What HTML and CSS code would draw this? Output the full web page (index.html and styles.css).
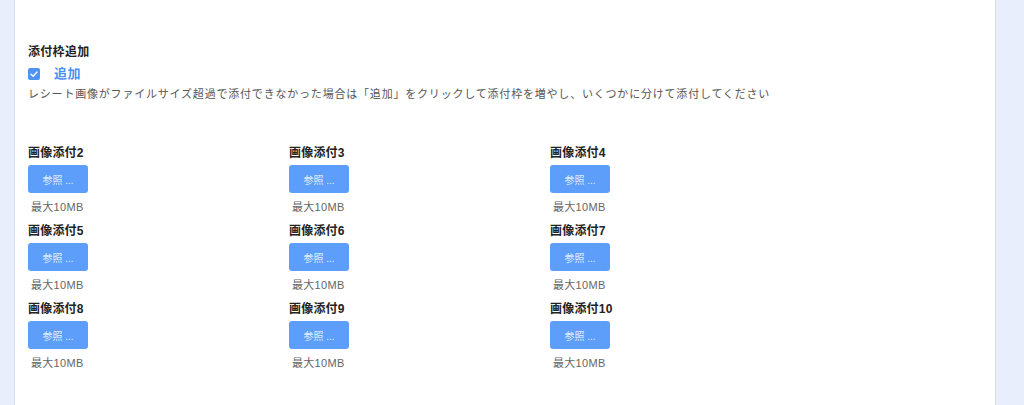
FILE: index.html
```html
<!DOCTYPE html>
<html lang="ja">
<head>
<meta charset="utf-8">
<link rel="stylesheet" href="styles.css">
</head>
<body>
<div class="page">
  <div class="card">
    <div class="section-title">添付枠追加</div>
    <label class="check-row">
      <span class="checkbox">
        <svg viewBox="0 0 12 12" width="12" height="12"><path d="M3 6.2 L5.1 8.2 L9 4" fill="none" stroke="#fff" stroke-width="1.4" stroke-linecap="round" stroke-linejoin="round"/></svg>
      </span>
      <span class="check-label">追加</span>
    </label>
    <p class="desc">レシート画像がファイルサイズ超過で添付できなかった場合は「追加」をクリックして添付枠を増やし、いくつかに分けて添付してください</p>
    <div class="grid">
      <div class="slot"><div class="slot-label">画像添付2</div><button class="browse">参照 ...</button><div class="limit">最大10MB</div></div>
      <div class="slot"><div class="slot-label">画像添付3</div><button class="browse">参照 ...</button><div class="limit">最大10MB</div></div>
      <div class="slot"><div class="slot-label">画像添付4</div><button class="browse">参照 ...</button><div class="limit">最大10MB</div></div>
      <div class="slot"><div class="slot-label">画像添付5</div><button class="browse">参照 ...</button><div class="limit">最大10MB</div></div>
      <div class="slot"><div class="slot-label">画像添付6</div><button class="browse">参照 ...</button><div class="limit">最大10MB</div></div>
      <div class="slot"><div class="slot-label">画像添付7</div><button class="browse">参照 ...</button><div class="limit">最大10MB</div></div>
      <div class="slot"><div class="slot-label">画像添付8</div><button class="browse">参照 ...</button><div class="limit">最大10MB</div></div>
      <div class="slot"><div class="slot-label">画像添付9</div><button class="browse">参照 ...</button><div class="limit">最大10MB</div></div>
      <div class="slot"><div class="slot-label">画像添付10</div><button class="browse">参照 ...</button><div class="limit">最大10MB</div></div>
    </div>
  </div>
</div>
</body>
</html>
```

FILE: styles.css
```css
* { box-sizing: border-box; }
html, body {
  margin: 0;
  padding: 0;
  background: #e8eefc;
  font-family: "Liberation Sans", "Noto Sans CJK JP", sans-serif;
}
.page {
  width: 1024px;
  height: 405px;
  overflow: hidden;
}
.card {
  margin-left: 14px;
  width: 982px;
  height: 405px;
  background: #fff;
  border-left: 1px solid #d8dce6;
  border-right: 1px solid #d8dce6;
  padding: 44px 13px 0;
}
.section-title {
  font-size: 12px;
  font-weight: 700;
  line-height: 16px;
  color: #222;
  letter-spacing: 0.3px;
}
.check-row {
  display: flex;
  align-items: center;
  gap: 14px;
  height: 16px;
  margin-top: 6px;
}
.checkbox {
  width: 12px;
  height: 12px;
  border-radius: 2px;
  background: #4f93f4;
  display: flex;
}
.check-label {
  font-size: 13px;
  font-weight: 700;
  color: #4a90f0;
  line-height: 16px;
  letter-spacing: 0.5px;
}
.desc {
  margin: 4px 0 0;
  font-size: 11px;
  line-height: 16px;
  letter-spacing: 0.8px;
  color: #555;
}
.grid {
  margin-top: 43px;
  display: grid;
  grid-template-columns: repeat(3, 261px);
  row-gap: 8px;
}
.slot {
  display: flex;
  flex-direction: column;
  align-items: flex-start;
}
.slot-label {
  font-size: 12px;
  font-weight: 700;
  line-height: 16px;
  color: #222;
  letter-spacing: 0.2px;
}
.browse {
  margin-top: 4px;
  width: 60px;
  height: 28px;
  border: none;
  border-radius: 3px;
  background: #5c9ef9;
  color: rgba(255, 255, 255, 0.85);
  font-family: inherit;
  font-size: 10px;
  padding: 0;
}
.limit {
  margin-top: 6px;
  padding-left: 3px;
  font-size: 11px;
  line-height: 16px;
  color: #666;
  letter-spacing: 0.3px;
}
```
